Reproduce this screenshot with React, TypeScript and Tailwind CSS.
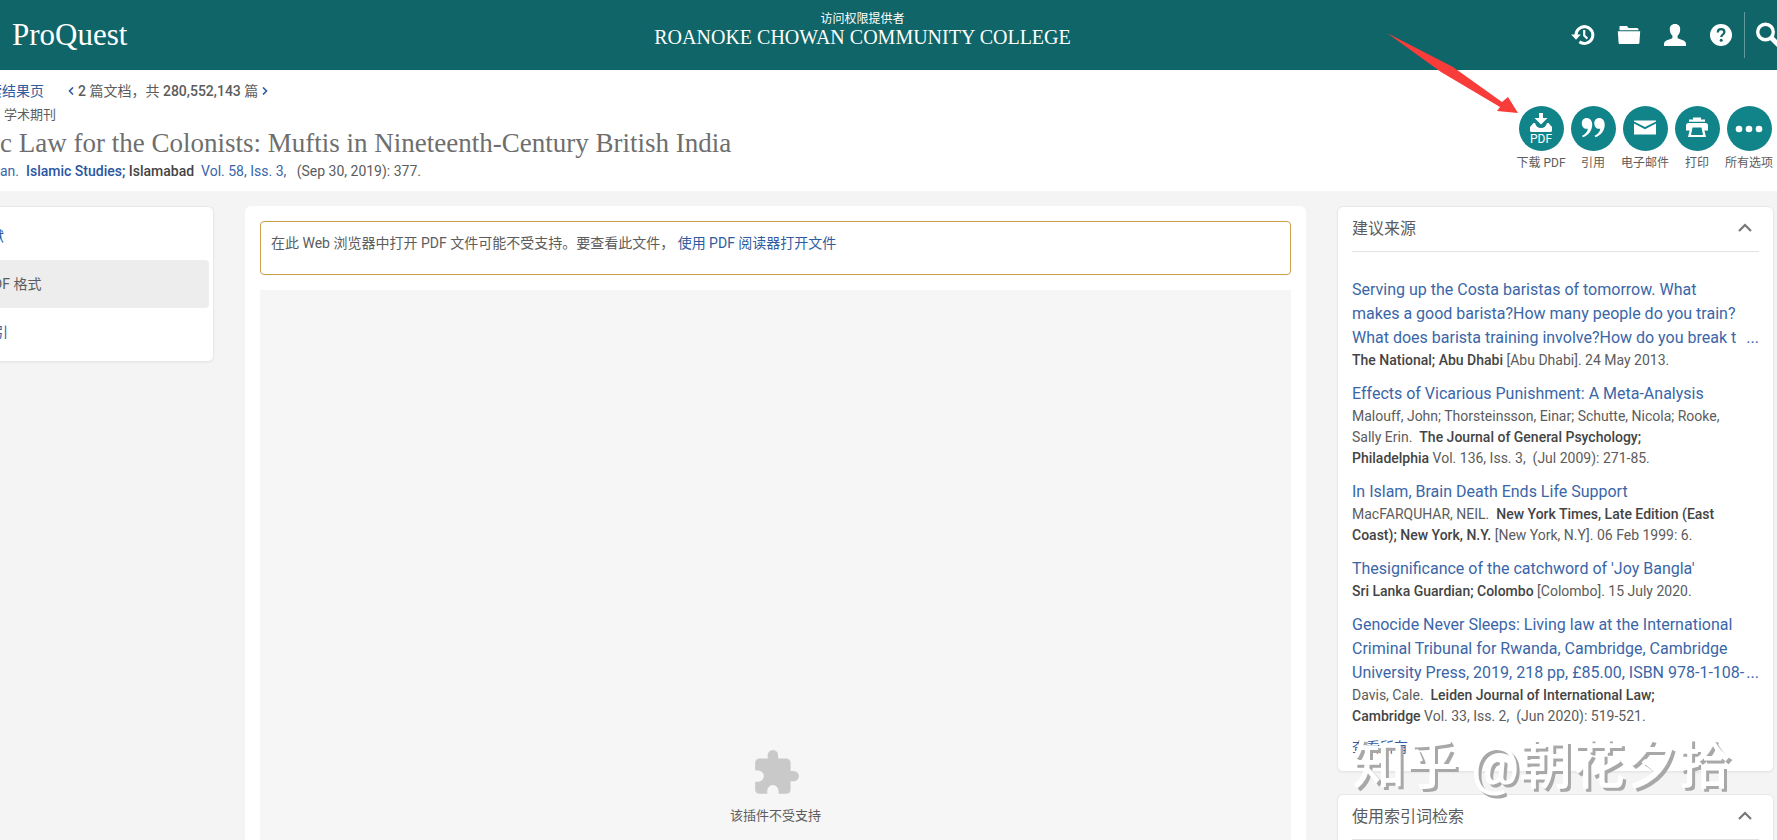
import React from 'react';

type Source = {
  title: string[];
  truncated?: boolean;
  authors?: string;
  publication: string;
  rest: string;
};

const sources: Source[] = [
  {
    title: [
      'Serving up the Costa baristas of tomorrow. What',
      'makes a good barista?How many people do you train?',
      'What does barista training involve?How do you break t',
    ],
    truncated: true,
    publication: 'The National; Abu Dhabi',
    rest: '[Abu Dhabi]. 24 May 2013.',
  },
  {
    title: ['Effects of Vicarious Punishment: A Meta-Analysis'],
    authors: 'Malouff, John; Thorsteinsson, Einar; Schutte, Nicola; Rooke, Sally Erin.',
    publication: 'The Journal of General Psychology;\nPhiladelphia',
    rest: 'Vol. 136, Iss. 3,\u00a0 (Jul 2009): 271-85.',
  },
  {
    title: ['In Islam, Brain Death Ends Life Support'],
    authors: 'MacFARQUHAR, NEIL.',
    publication: 'New York Times, Late Edition (East Coast); New York, N.Y.',
    rest: '[New York, N.Y]. 06 Feb 1999: 6.',
  },
  {
    title: ["Thesignificance of the catchword of 'Joy Bangla'"],
    publication: 'Sri Lanka Guardian; Colombo',
    rest: '[Colombo]. 15 July 2020.',
  },
  {
    title: [
      'Genocide Never Sleeps: Living law at the International',
      'Criminal Tribunal for Rwanda, Cambridge, Cambridge',
      'University Press, 2019, 218 pp, £85.00, ISBN 978-1-108-',
    ],
    truncated: true,
    authors: 'Davis, Cale.',
    publication: 'Leiden Journal of International Law;\nCambridge',
    rest: 'Vol. 33, Iss. 2,\u00a0 (Jun 2020): 519-521.',
  },
];

const HistoryIcon = () => (
  <svg className="h-6 w-6" viewBox="0 0 24 24" fill="none" stroke="currentColor" strokeWidth="3">
    <path d="M5 12.500a8.400 8.400 0 1 1 3.400 6.300" />
    <path d="M13.200 7v5.600l3.200 3" strokeWidth="2.200" />
    <path d="M.2 11.400h9.600L5 16.800z" fill="currentColor" stroke="none" />
  </svg>
);

const FolderIcon = () => (
  <svg className="h-6 w-6" viewBox="0 0 24 24" fill="currentColor">
    <path d="M3 3h7l1.500 2H20a1.500 1.500 0 0 1 1.500 1.500v.7H2.500V3.500z" />
    <path d="M.8 8.200h22.400L22.400 20a1.200 1.200 0 0 1-1.200 1H2.800A1.200 1.200 0 0 1 1.600 20z" />
  </svg>
);

const UserIcon = () => (
  <svg className="h-6 w-6" viewBox="0 0 24 24" fill="currentColor">
    <path d="M12 1c3.600 0 5.400 2.400 5.200 5.600-.1 2.800-1.100 5-2.600 6.200v2.400l6 2.400c1.600.7 2.400 2 2.400 3.400v2H1v-2c0-1.400.8-2.700 2.400-3.400l6-2.400v-2.400C7.900 11.600 6.900 9.400 6.800 6.600 6.600 3.400 8.400 1 12 1z" />
  </svg>
);

const HelpIcon = () => (
  <svg className="h-6 w-6" viewBox="0 0 24 24">
    <circle cx="12" cy="12" r="11" fill="white" />
    <path d="M8.800 9.400c0-2 1.400-3.200 3.300-3.200s3.300 1.100 3.300 2.900c0 2.300-3.200 2.500-3.200 5" fill="none" stroke="#0f6568" strokeWidth="2.200" />
    <circle cx="12.200" cy="17.200" r="1.500" fill="#0f6568" />
  </svg>
);

const SearchIcon = () => (
  <svg className="h-7 w-7 shrink-0" viewBox="0 0 28 28" fill="none" stroke="currentColor">
    <circle cx="10.500" cy="11" r="7.800" strokeWidth="3.400" />
    <path d="M16 16.500l8 8" strokeWidth="5" />
  </svg>
);

const DownloadIcon = () => (
  <svg className="h-5 w-6" viewBox="0 0 24 20" fill="currentColor">
    <path d="M10 0h4v5h4.500L12 11.500 5.500 5H10z" />
    <path d="M4.500 10H6c.6 3 3 5 6 5s5.400-2 6-5h1.500l3.500 4v3.500a1.500 1.500 0 0 1-1.500 1.500h-19A1.500 1.500 0 0 1 1 17.500V14z" />
  </svg>
);

const QuoteIcon = () => (
  <svg className="h-6 w-6" viewBox="0 0 24 24" fill="currentColor">
    <path d="M5.500 1c3.400 0 5.700 2.600 5.700 6.500 0 6-3.600 10.900-9.400 12.800l-.7-1.500c3.300-1.700 5.300-4.100 5.700-7.100-3.300.9-6-1.800-6-5.200C.8 3.300 2.700 1 5.500 1z" />
    <path d="M18 1c3.400 0 5.700 2.600 5.700 6.500 0 6-3.600 10.900-9.400 12.800l-.7-1.500c3.300-1.700 5.300-4.100 5.700-7.100-3.300.9-6-1.800-6-5.200C13.300 3.300 15.200 1 18 1z" />
  </svg>
);

const MailIcon = () => (
  <svg className="h-6 w-6" viewBox="0 0 24 24" fill="currentColor">
    <path d="M1 3.500h22v1L12 10 1 4.500z" />
    <path d="M1 6.400l11 5.800 11-5.800v11.100H1z" />
  </svg>
);

const PrintIcon = () => (
  <svg className="h-6 w-6" viewBox="0 0 24 24" fill="currentColor">
    <path d="M8 .500h8v2h4v2.300H4V2.500h4z" />
    <path fillRule="evenodd" d="M3.500 6h17A2.500 2.500 0 0 1 23 8.500v5h-3.600L21 20H3l1.600-6.500H1v-5A2.500 2.500 0 0 1 3.500 6zM7.500 10.500L6 18h12l-1.500-7.500z" />
  </svg>
);

const DotsIcon = () => (
  <svg className="h-6 w-7" viewBox="0 0 28 24" fill="currentColor">
    <circle cx="4" cy="12" r="3.300" />
    <circle cx="14" cy="12" r="3.300" />
    <circle cx="24" cy="12" r="3.300" />
  </svg>
);

const actions = [
  { label: '下载 PDF', icon: <DownloadIcon />, caption: 'PDF' },
  { label: '引用', icon: <QuoteIcon /> },
  { label: '电子邮件', icon: <MailIcon /> },
  { label: '打印', icon: <PrintIcon /> },
  { label: '所有选项', icon: <DotsIcon /> },
];

const PanelHeading = ({ children }: { children: React.ReactNode }) => (
  <button className="flex w-full items-center justify-between border-b border-[#e2e2e2] pb-2 text-left">
    <span className="text-base leading-7">{children}</span>
    <svg className="mr-[6px] h-3 w-4" viewBox="0 0 16 12" fill="none" stroke="#777" strokeWidth="2.200">
      <path d="M2 8l6-6 6 6" />
    </svg>
  </button>
);

const SourceItem = ({ source }: { source: Source }) => (
  <li>
    <a href="#" className="block text-base leading-6 text-[#3a66a8]">
      {source.title.map((line, i) => (
        <span key={line} className="flex justify-between whitespace-nowrap">
          <span>{line}</span>
          {source.truncated && i === source.title.length - 1 && <span>...</span>}
        </span>
      ))}
    </a>
    <p className="pr-4 text-sm leading-[21px] whitespace-pre-line">
      {source.authors && <>{source.authors}&nbsp; </>}
      <strong className="font-medium text-[#444]">{source.publication}</strong> {source.rest}
    </p>
  </li>
);

const App = () => {
  return (
    <div className="relative flex h-screen flex-col overflow-hidden bg-[#f4f4f4] font-[Roboto,'Noto_Sans_CJK_SC',sans-serif] text-sm text-[#5c5c5c]">
      <header className="flex h-[70px] shrink-0 items-center justify-between bg-[#0f6568] text-white">
        <a href="#" className="flex-1 pl-3 font-['Liberation_Serif',serif] text-[31px] leading-8">ProQuest</a>
        <div className="pr-16 pb-3 text-center">
          <p className="text-xs leading-4">访问权限提供者</p>
          <p className="font-['Liberation_Serif',serif] text-xl leading-5">ROANOKE CHOWAN COMMUNITY COLLEGE</p>
        </div>
        <nav className="flex flex-1 items-center justify-end">
          <div className="flex gap-[22px]">
            <button aria-label="最近检索"><HistoryIcon /></button>
            <button aria-label="文件夹"><FolderIcon /></button>
            <button aria-label="帐户"><UserIcon /></button>
            <button aria-label="帮助"><HelpIcon /></button>
          </div>
          <button aria-label="检索" className="ml-[11px] flex h-[46px] w-[33px] items-center overflow-hidden border-l border-[#5f9a9c] pl-[10px]">
            <SearchIcon />
          </button>
        </nav>
      </header>

      <section className="flex shrink-0 justify-between bg-white pt-[9px] pb-1">
        <div className="pb-1">
          <div className="-ml-3 flex gap-6 leading-6">
            <a href="#" className="text-[#2f5c9e]">索结果页</a>
            <span className="flex items-center gap-1">
              <a href="#" aria-label="上一篇" className="text-[#2f5c9e]">
                <svg className="h-2 w-[6px]" viewBox="0 0 6 8" fill="none" stroke="currentColor" strokeWidth="1.600"><path d="M5 .500L1.500 4 5 7.500" /></svg>
              </a>
              <span><b className="font-medium">2</b> 篇文档，共 <b className="font-medium">280,552,143</b> 篇</span>
              <a href="#" aria-label="下一篇" className="text-[#2f5c9e]">
                <svg className="h-2 w-[6px]" viewBox="0 0 6 8" fill="none" stroke="currentColor" strokeWidth="1.600"><path d="M1 .500L4.500 4 1 7.500" /></svg>
              </a>
            </span>
          </div>
          <p className="pl-1 text-[13px] leading-6">学术期刊</p>
          <h1 className="font-['Roboto_Slab','Liberation_Serif',serif] text-[27px] leading-8 text-[#6e6e6e]">c Law for the Colonists: Muftis in Nineteenth-Century British India</h1>
          <p className="leading-6">
            <a href="#" className="text-[#3a66a8]">an.</a>&nbsp;{' '}
            <a href="#" className="font-medium text-[#2a56a0]">Islamic Studies;</a> <b className="font-medium text-[#444]">Islamabad</b>&nbsp;{' '}
            <a href="#" className="text-[#3a66a8]">Vol. 58, Iss. 3,</a>&nbsp;&nbsp; (Sep 30, 2019): 377.
          </p>
        </div>
        <div className="flex pt-[27px] pr-[2px]">
          {actions.map((action) => (
            <button key={action.label} className="flex w-[52px] flex-col items-center text-xs whitespace-nowrap">
              <span className="flex h-[45px] w-[45px] flex-col items-center justify-center rounded-full bg-[#11848a] leading-3 text-white">
                {action.icon}
                {action.caption}
              </span>
              <span className="leading-6">{action.label}</span>
            </button>
          ))}
        </div>
      </section>

      <div className="flex min-h-0 flex-1 items-start gap-[31px] pt-[15px] pr-[3px]">
        <nav className="w-[214px] shrink-0 rounded-r-md border border-l-0 border-[#e8e8ec] bg-white py-[5px] pr-1 leading-[48px] shadow-xs">
          <a href="#" className="-ml-[10px] block text-[#2f5c9e]">献</a>
          <a href="#" className="block rounded-r bg-[#ededed]"><span className="-ml-[7px]">DF 格式</span></a>
          <a href="#" className="-ml-[6px] block text-[#2f5c9e]">引</a>
        </nav>

        <main className="flex min-w-0 flex-1 flex-col gap-[15px] self-stretch rounded-t-md bg-white px-[15px] pt-[15px]">
          <div className="rounded border border-[#c9a24a] px-[10px] pt-[9px] pb-[19px] leading-6">
            在此 Web 浏览器中打开 PDF 文件可能不受支持。要查看此文件，{' '}
            <a href="#" className="text-[#2f5c9e]">使用 PDF 阅读器打开文件</a>
          </div>
          <div className="flex flex-1 flex-col items-center justify-end gap-[6px] bg-[#f6f6f6] pb-3">
            <svg className="h-[50px] w-[50px]" viewBox="0 0 24 24" fill="#c9c9c9">
              <path d="M20.500 11H19V7c0-1.100-.9-2-2-2h-4V3.500a2.500 2.500 0 0 0-5 0V5H4c-1.100 0-2 .9-2 2v3.800h1.500a2.700 2.700 0 0 1 0 5.400H2V20c0 1.100.9 2 2 2h3.800v-1.500a2.700 2.700 0 0 1 5.400 0V22H17c1.100 0 2-.9 2-2v-4h1.500a2.500 2.500 0 0 0 0-5z" />
            </svg>
            <p className="text-[13px] leading-6">该插件不受支持</p>
          </div>
        </main>

        <aside className="flex w-[437px] shrink-0 flex-col gap-[22px]">
          <section className="rounded-md border border-[#e8e8ec] bg-white px-[14px] pt-2 pb-3 shadow-xs">
            <PanelHeading>建议来源</PanelHeading>
            <ul className="flex flex-col gap-[11px] pt-[26px]">
              {sources.map((source) => (
                <SourceItem key={source.title[0]} source={source} />
              ))}
            </ul>
            <a href="#" className="mt-2 block leading-6 text-[#2f5c9e]">查看所有</a>
          </section>
          <section className="rounded-md border border-[#e8e8ec] bg-white px-[14px] pt-2 pb-10 shadow-xs">
            <PanelHeading>使用索引词检索</PanelHeading>
          </section>
        </aside>
      </div>

      <svg className="pointer-events-none absolute top-8 right-[259px] h-[83px] w-[131px]" viewBox="0 0 131 83" fill="#f73c3a">
        <path d="M0 1L66 35 115 70 121 65 131 81 110 79 113 75 54 40z" />
      </svg>
      <p className="pointer-events-none absolute right-[46px] bottom-[42px] text-[53px] leading-[64px] font-medium whitespace-nowrap text-white [text-shadow:3px_3px_0_#a8a8a8]">知乎 @朝花夕拾</p>
    </div>
  );
};

export default App;
